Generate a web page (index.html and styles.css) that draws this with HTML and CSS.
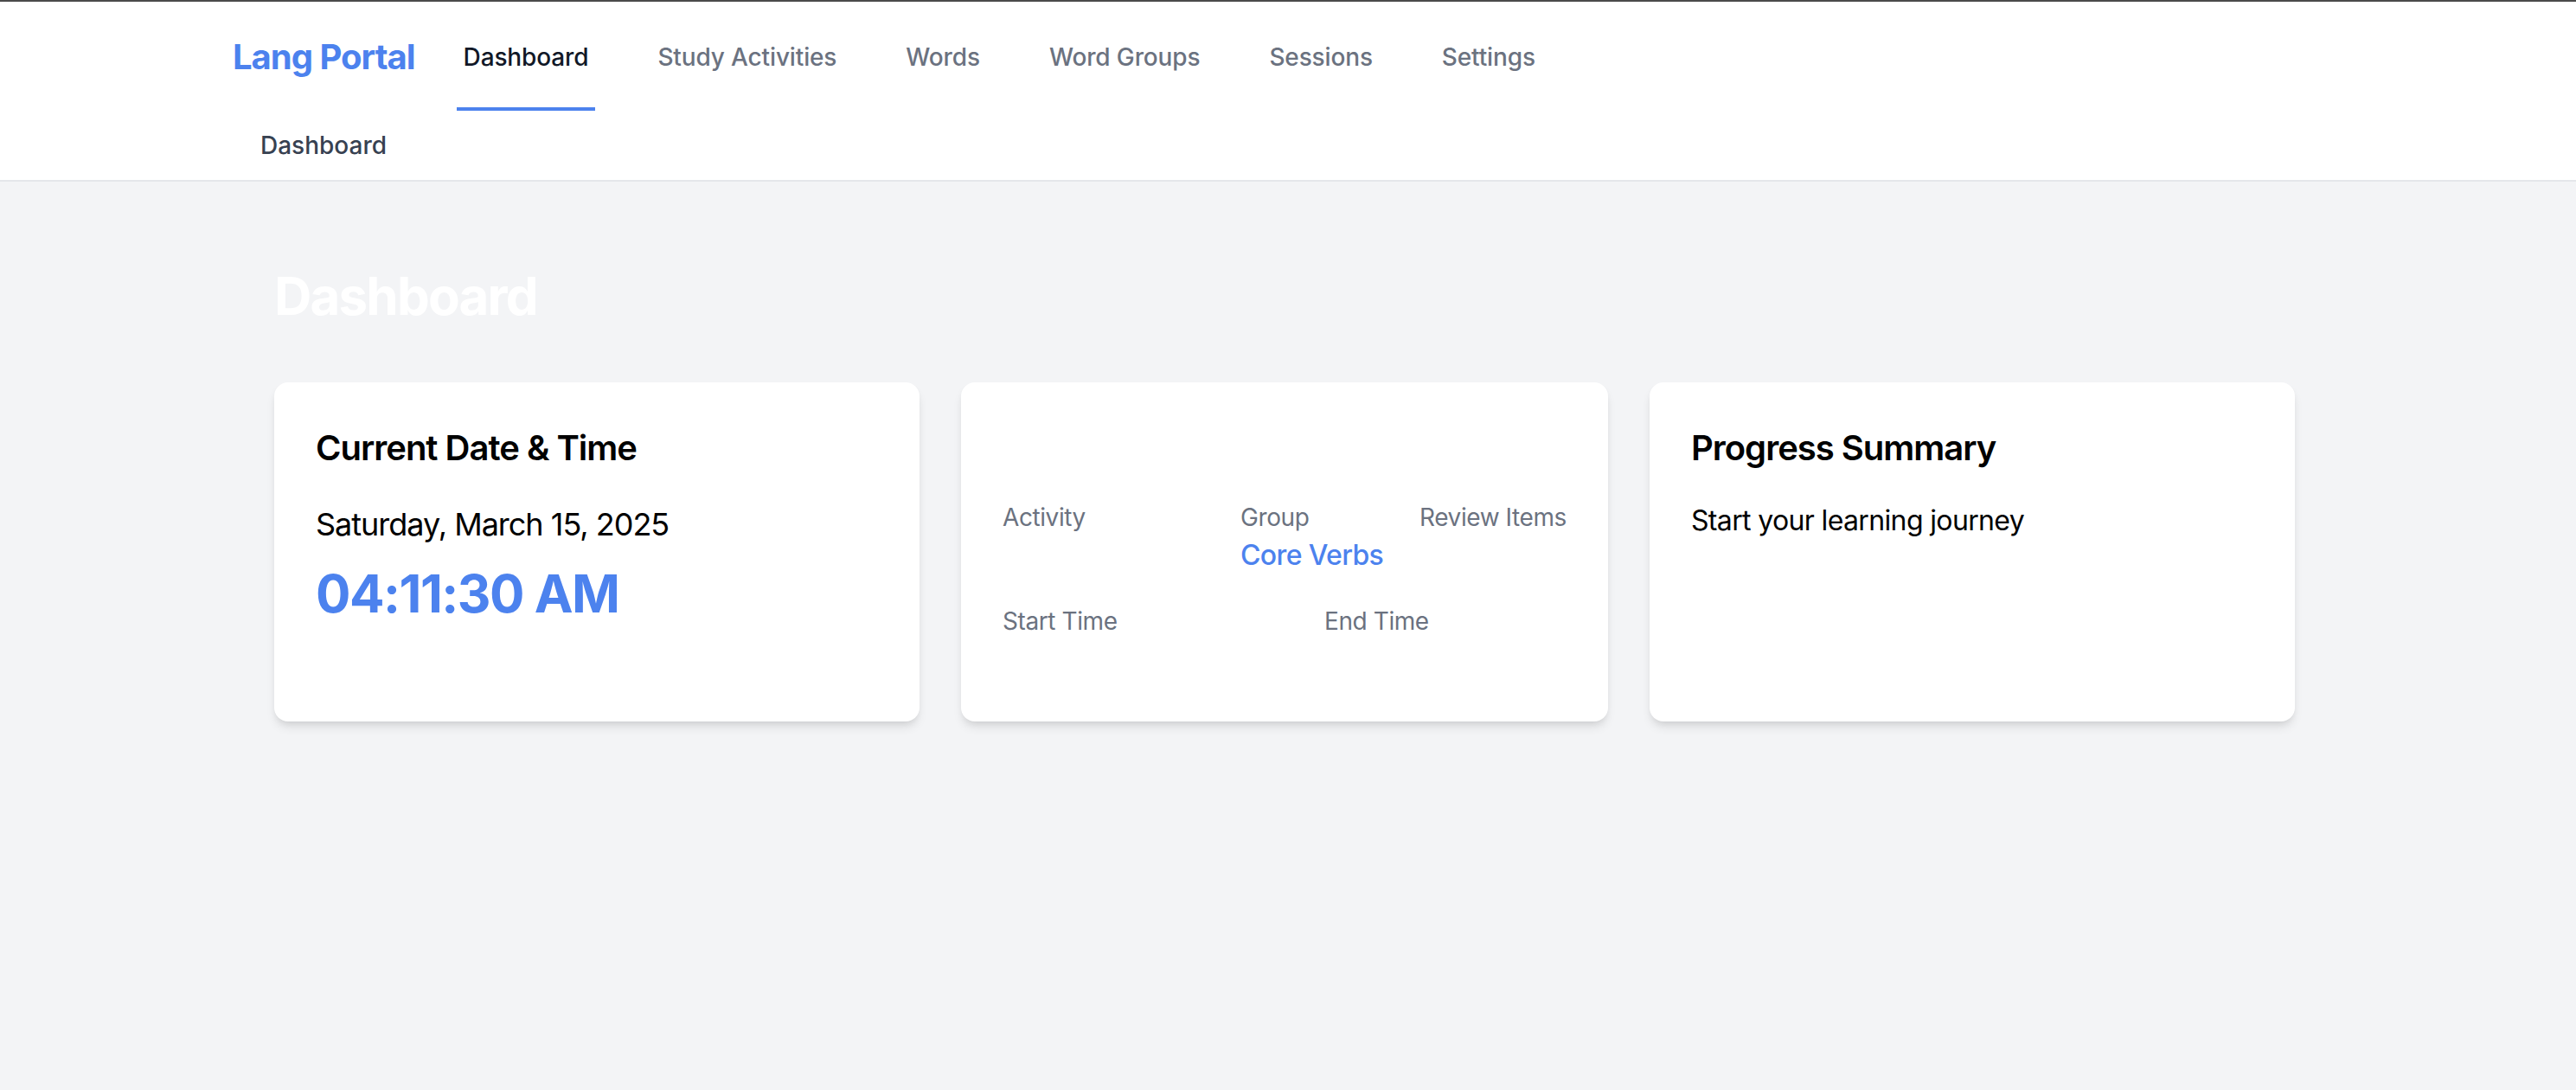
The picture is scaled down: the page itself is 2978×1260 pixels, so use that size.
FILE: index.html
```html
<!DOCTYPE html>
<html lang="en">
<head>
<meta charset="utf-8">
<title>Lang Portal</title>
<link rel="stylesheet" href="styles.css">
</head>
<body>
<header class="site-header">
  <div class="header-inner">
    <div class="nav-row">
      <a class="logo" href="#">Lang Portal</a>
      <nav class="nav-links">
        <a class="nav-link active" href="#">Dashboard</a>
        <a class="nav-link" href="#">Study Activities</a>
        <a class="nav-link" href="#">Words</a>
        <a class="nav-link" href="#">Word Groups</a>
        <a class="nav-link" href="#">Sessions</a>
        <a class="nav-link" href="#">Settings</a>
      </nav>
    </div>
    <div class="breadcrumb-row">
      <span class="breadcrumb">Dashboard</span>
    </div>
  </div>
</header>
<main class="main">
  <div class="main-inner">
    <h1 class="page-title">Dashboard</h1>
    <div class="cards">
      <section class="card">
        <h2 class="card-title">Current Date &amp; Time</h2>
        <p class="date-text">Saturday, March 15, 2025</p>
        <p class="time-text">04:11:30 AM</p>
      </section>
      <section class="card">
        <h2 class="card-title card-title-empty"></h2>
        <div class="session-row session-row-top">
          <div class="field">
            <div class="field-label">Activity</div>
            <div class="field-value"></div>
          </div>
          <div class="field">
            <div class="field-label">Group</div>
            <a class="field-value field-link" href="#">Core Verbs</a>
          </div>
          <div class="field">
            <div class="field-label">Review Items</div>
            <div class="field-value"></div>
          </div>
        </div>
        <div class="session-row session-row-bottom">
          <div class="field">
            <div class="field-label">Start Time</div>
            <div class="field-value"></div>
          </div>
          <div class="field">
            <div class="field-label">End Time</div>
            <div class="field-value"></div>
          </div>
        </div>
      </section>
      <section class="card">
        <h2 class="card-title">Progress Summary</h2>
        <p class="summary-text">Start your learning journey</p>
      </section>
    </div>
  </div>
</main>
</body>
</html>
```
FILE: styles.css
```css
* {
  box-sizing: border-box;
}

html, body {
  margin: 0;
  padding: 0;
}

body {
  font-family: Inter, "Noto Sans", "Liberation Sans", sans-serif;
  background: #f3f4f6;
  color: #000;
  min-height: 1260px;
}

a {
  text-decoration: none;
}

.site-header {
  background: #ffffff;
  border-top: 2px solid #4a4a4a;
  border-bottom: 2px solid #e5e7eb;
  padding-right: 8px;
}

.header-inner {
  max-width: 2560px;
  margin: 0 auto;
  padding: 0 64px;
}

.nav-row {
  display: flex;
  align-items: center;
  height: 126px;
}

.logo {
  font-size: 40px;
  font-weight: 700;
  color: #4c82ee;
  letter-spacing: -0.025em;
}

.nav-links {
  display: flex;
  align-self: stretch;
  margin-left: 48px;
  gap: 64px;
}

.nav-link {
  display: flex;
  align-items: center;
  padding: 6px 8px 0;
  border-bottom: 4px solid transparent;
  font-size: 28px;
  font-weight: 500;
  color: #6b7280;
  letter-spacing: -0.005em;
  white-space: nowrap;
}

.nav-link.active {
  color: #111827;
  border-bottom-color: #4c82ee;
}

.breadcrumb-row {
  display: flex;
  align-items: center;
  height: 80px;
  padding-left: 32px;
}

.breadcrumb {
  font-size: 28px;
  font-weight: 500;
  color: #374151;
}

.main {
  padding-right: 8px;
}

.main-inner {
  max-width: 2560px;
  margin: 0 auto;
  padding: 96px 112px;
}

.page-title {
  margin: 0 0 64px;
  font-size: 60px;
  line-height: 72px;
  font-weight: 700;
  color: #ffffff;
  letter-spacing: -0.03em;
}

.cards {
  display: grid;
  grid-template-columns: repeat(3, 1fr);
  gap: 48px;
}

.card {
  background: #ffffff;
  border-radius: 16px;
  padding: 48px;
  box-shadow: 0 8px 12px -2px rgba(0, 0, 0, 0.1), 0 4px 8px -4px rgba(0, 0, 0, 0.1);
}

.card-title {
  margin: 0 0 32px;
  font-size: 40px;
  line-height: 56px;
  font-weight: 600;
  color: #000;
  letter-spacing: -0.025em;
}

.card-title-empty {
  height: 56px;
}

.date-text {
  margin: 0;
  font-size: 36px;
  line-height: 56px;
  letter-spacing: -0.028em;
}

.time-text {
  margin: 16px 0 0;
  font-size: 60px;
  line-height: 72px;
  font-weight: 700;
  color: #4c82ee;
  letter-spacing: -0.025em;
}

.session-row {
  display: grid;
}

.session-row-top {
  grid-template-columns: 275px 207px auto;
}

.session-row-bottom {
  margin-top: 32px;
  grid-template-columns: 372px auto;
}

.field-label {
  font-size: 28px;
  line-height: 40px;
  color: #6b7280;
  white-space: nowrap;
  letter-spacing: -0.015em;
}

.field-value {
  display: block;
  min-height: 48px;
  font-size: 32px;
  line-height: 48px;
}

.field-link {
  color: #4c82ee;
  font-weight: 500;
  white-space: nowrap;
  letter-spacing: -0.02em;
}

.summary-text {
  margin: 0;
  font-size: 32px;
  line-height: 48px;
  letter-spacing: -0.02em;
}
```
